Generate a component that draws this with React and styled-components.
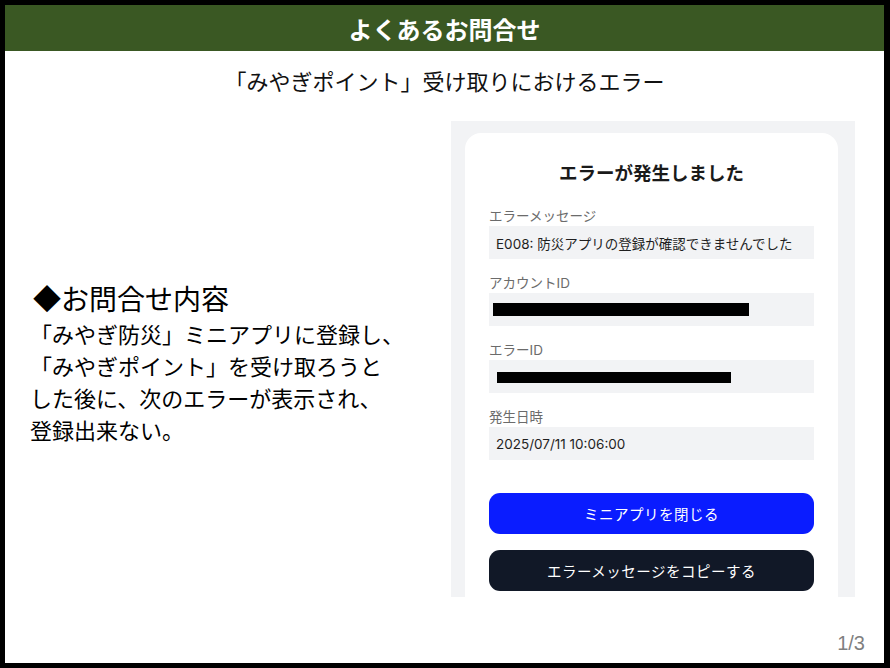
import styled, { createGlobalStyle } from "styled-components";

const GlobalStyle = createGlobalStyle`
	* {
		box-sizing: border-box;
	}
	body {
		margin: 0;
		background: #ffffff;
		font-family: "Noto Sans CJK JP", "Noto Sans", sans-serif;
	}
`;

const fields = [
	{ label: "エラーメッセージ", value: "E008: 防災アプリの登録が確認できませんでした" },
	{ label: "アカウントID", redact: { width: 256, height: 13, left: 4, top: 10 } },
	{ label: "エラーID", redact: { width: 234, height: 11, left: 8, top: 12 } },
	{ label: "発生日時", value: "2025/07/11 10:06:00" },
];

const App = () => {
	return (
		<>
			<GlobalStyle />
			<S.Slide>
				<S.Header>よくあるお問合せ</S.Header>
				<S.Subtitle>「みやぎポイント」受け取りにおけるエラー</S.Subtitle>
				<S.Content>
					<S.Inquiry>
						<S.InquiryTitle>◆お問合せ内容</S.InquiryTitle>
						<S.InquiryText>
							「みやぎ防災」ミニアプリに登録し、
							<br />
							「みやぎポイント」を受け取ろうと
							<br />
							した後に、次のエラーが表示され、
							<br />
							登録出来ない。
						</S.InquiryText>
					</S.Inquiry>
					<S.Phone>
						<S.Card>
							<S.CardTitle>エラーが発生しました</S.CardTitle>
							{fields.map((f) => (
								<S.Field key={f.label}>
									<S.Label>{f.label}</S.Label>
									<S.Value>
										{f.value}
										{f.redact && (
											<S.Redact
												$w={f.redact.width}
												$h={f.redact.height}
												$l={f.redact.left}
												$t={f.redact.top}
											/>
										)}
									</S.Value>
								</S.Field>
							))}
							<S.Buttons>
								<S.Button $variant="primary">ミニアプリを閉じる</S.Button>
								<S.Button $variant="dark">エラーメッセージをコピーする</S.Button>
							</S.Buttons>
						</S.Card>
					</S.Phone>
				</S.Content>
				<S.PageNo>1/3</S.PageNo>
			</S.Slide>
		</>
	);
};

export default App;

const Slide = styled.div`
	width: 890px;
	height: 668px;
	border: 5px solid #000000;
	border-right-width: 6px;
	display: flex;
	flex-direction: column;
	background: #ffffff;
	overflow: hidden;
`;

const Header = styled.div`
	height: 46px;
	flex-shrink: 0;
	background: #3a5823;
	color: #ffffff;
	font-size: 24px;
	font-weight: 700;
	display: flex;
	align-items: center;
	justify-content: center;
`;

const Subtitle = styled.div`
	margin-top: 14px;
	text-align: center;
	font-size: 22px;
	line-height: 30px;
	color: #111111;
`;

const Content = styled.div`
	margin-top: 26px;
	display: grid;
	grid-template-columns: 1fr 404px;
	padding-right: 29px;
	align-items: center;
`;

const Inquiry = styled.div`
	padding-left: 28px;
	color: #000000;
	margin-top: 6px;
`;

const InquiryTitle = styled.div`
	font-size: 28px;
	line-height: 36px;
	margin-bottom: 1px;
`;

const InquiryText = styled.p`
	margin: 0;
	font-size: 22px;
	line-height: 32px;
	margin-left: -3px;
`;

const Phone = styled.div`
	height: 476px;
	background: #f2f3f5;
	padding: 12px 17px 0 14px;
	display: flex;
	font-family: Inter, "Noto Sans CJK JP", sans-serif;
`;

const Card = styled.div`
	flex: 1;
	background: #ffffff;
	border-radius: 16px 16px 0 0;
	padding: 28px 24px 0;
	display: flex;
	flex-direction: column;
`;

const CardTitle = styled.div`
	text-align: center;
	font-size: 18.5px;
	font-weight: 700;
	line-height: 24px;
	color: #1a1a1a;
	margin-bottom: 22px;
`;

const Field = styled.div`
	display: flex;
	flex-direction: column;
	margin-bottom: 15px;
`;

const Label = styled.div`
	font-size: 13.5px;
	line-height: 18px;
	color: #6b6b6b;
	margin-bottom: 1px;
`;

const Value = styled.div`
	position: relative;
	height: 33px;
	background: #f2f3f5;
	padding: 0 7px;
	font-size: 13.5px;
	color: #1f1f1f;
	display: flex;
	align-items: center;
	white-space: nowrap;
`;

const Redact = styled.span`
	position: absolute;
	left: ${({ $l }) => $l}px;
	top: ${({ $t }) => $t}px;
	width: ${({ $w }) => $w}px;
	height: ${({ $h }) => $h}px;
	background: #000000;
`;

const Buttons = styled.div`
	margin-top: 18px;
	display: flex;
	flex-direction: column;
	gap: 16px;
`;

const Button = styled.button`
	height: 41px;
	border: none;
	border-radius: 11px;
	font-family: inherit;
	font-size: 14.5px;
	letter-spacing: 0.5px;
	color: #ffffff;
	background: ${({ $variant }) => ($variant === "primary" ? "#0a1cff" : "#111827")};
`;

const PageNo = styled.div`
	margin-top: auto;
	align-self: flex-end;
	padding: 0 19px 10px 0;
	font-family: "Liberation Sans", sans-serif;
	font-size: 20px;
	line-height: 20px;
	color: #7f7f7f;
`;

const S = {
	Slide,
	Header,
	Subtitle,
	Content,
	Inquiry,
	InquiryTitle,
	InquiryText,
	Phone,
	Card,
	CardTitle,
	Field,
	Label,
	Value,
	Redact,
	Buttons,
	Button,
	PageNo,
};
